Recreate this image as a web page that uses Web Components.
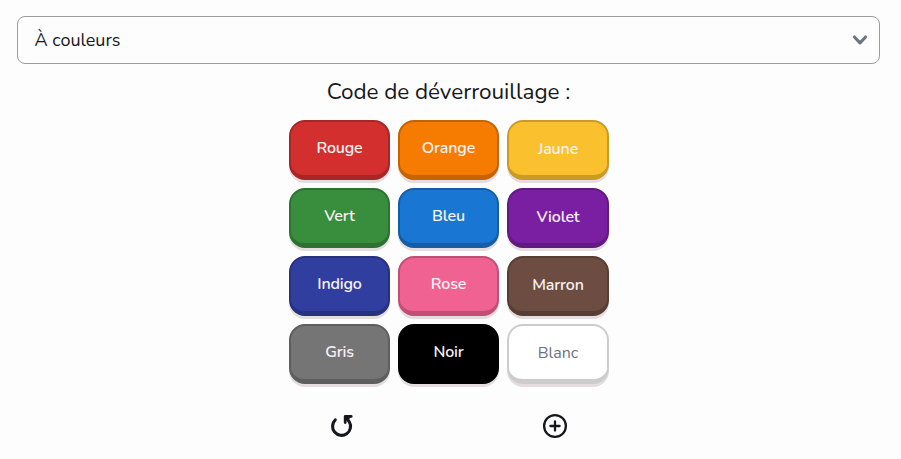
<!DOCTYPE html>
<html lang="fr">
<head>
<meta charset="utf-8">
<title>Code de déverrouillage</title>
<style>
html,body{margin:0;background:#fdfdfd;color:#16181b;font-family:Nunito,Lato,"Noto Sans",sans-serif}
</style>
</head>
<body>
<lock-page></lock-page>
<script>
class SelectBox extends HTMLElement {
  connectedCallback() {
    this.attachShadow({mode: 'open'}).innerHTML = `<style>
      :host{display:flex;align-items:center;justify-content:space-between;box-sizing:border-box;height:48px;
        padding:0 11px 0 16.5px;border:1px solid #9a9c9f;border-radius:8px;font-size:18px;line-height:24px}
      svg{display:block}</style>
      <slot></slot>
      <svg width="16" height="16" viewBox="0 0 16 16" fill="none" stroke="#6c757d" stroke-width="3.1" stroke-linecap="round" stroke-linejoin="round"><path d="M2.4 5 8 10.8 13.6 5"/></svg>`;
  }
}
customElements.define('select-box', SelectBox);

class ColorButton extends HTMLElement {
  connectedCallback() {
    const c = this.getAttribute('color'), e = this.getAttribute('edge');
    this.attachShadow({mode: 'open'}).innerHTML = `<style>
      :host{display:flex;align-items:center;justify-content:center;box-sizing:border-box;height:60px;padding:0 0 2px 1px;
        background:${c};border:2px solid ${e};border-bottom-width:5px;border-radius:16px;
        box-shadow:0 3px 0 #e4dcde;color:#f7f2f4;font-size:16px;font-weight:600;line-height:20px;letter-spacing:-.15px}
      :host([low]){padding-bottom:0}
      :host([light]){color:#6c7280;font-weight:400;letter-spacing:0}</style><slot></slot>`;
  }
}
customElements.define('color-button', ColorButton);

class ColorPad extends HTMLElement {
  connectedCallback() {
    this.attachShadow({mode: 'open'}).innerHTML = `<style>
      :host{display:grid;grid-template-columns:101px 101px 102px;gap:8px;width:320px}</style><slot></slot>`;
  }
}
customElements.define('color-pad', ColorPad);

class IconAction extends HTMLElement {
  connectedCallback() {
    const art = {
      reset: '<path d="M5.3 6.9A9 9 0 1 0 19.3 8.8L16.4 5" stroke-width="3.1" stroke-linecap="round"/><path d="M21.2 3.4H15.2V9.6" stroke-width="2.8" stroke-linecap="round" stroke-linejoin="round"/><path d="M15 3h6l-3 4Z" fill="#16181b"/>',
      add: '<circle cx="12" cy="13" r="10.9" stroke-width="2.3"/><path d="M12 8.4v9.2M7.4 13h9.2" stroke-width="2.3" stroke-linecap="round"/>'
    }[this.getAttribute('name')];
    this.attachShadow({mode: 'open'}).innerHTML = `<style>:host{display:flex;justify-content:center}svg{display:block;overflow:visible}</style>
      <svg width="24" height="25" viewBox="0 0 24 25" fill="none" stroke="#16181b">${art}</svg>`;
  }
}
customElements.define('icon-action', IconAction);

class LockPage extends HTMLElement {
  connectedCallback() {
    const colors = [
      ['Rouge','#d32f2f','#a92626'],['Orange','#f57c00','#c46300'],['Jaune','#fbc02d','#c99a24'],
      ['Vert','#388e3c','#2d7230'],['Bleu','#1976d2','#145ea8'],['Violet','#7b1fa2','#621982'],
      ['Indigo','#303f9f','#26327f'],['Rose','#f06292','#c04e75'],['Marron','#6d4c41','#573d34'],
      ['Gris','#757575','#5e5e5e'],['Noir','#000','#000'],['Blanc','#fff','#ccc']];
    this.attachShadow({mode: 'open'}).innerHTML = `<style>
      :host{display:flex;flex-direction:column;align-items:center;box-sizing:border-box;height:459px;padding:16px 21px 0 17px;overflow:hidden}
      select-box{width:100%}
      h1{margin:11px 0 12px;font-size:22.5px;font-weight:400;line-height:33px;height:33px;letter-spacing:-.04px}
      nav{display:grid;grid-template-columns:101px 101px 102px;column-gap:8px;width:320px;margin-top:29px}
      nav icon-action:first-child{padding-left:5px}
      nav icon-action:last-child{grid-column:3;padding-right:6px}</style>
      <select-box>À couleurs</select-box>
      <h1>Code de déverrouillage :</h1>
      <color-pad>${colors.map(([t,c,e],i)=>`<color-button color="${c}" edge="${e}"${i%3===2?' low':''}${t==='Blanc'?' light':''}>${t}</color-button>`).join('')}</color-pad>
      <nav><icon-action name="reset"></icon-action><icon-action name="add"></icon-action></nav>`;
  }
}
customElements.define('lock-page', LockPage);
</script>
</body>
</html>
